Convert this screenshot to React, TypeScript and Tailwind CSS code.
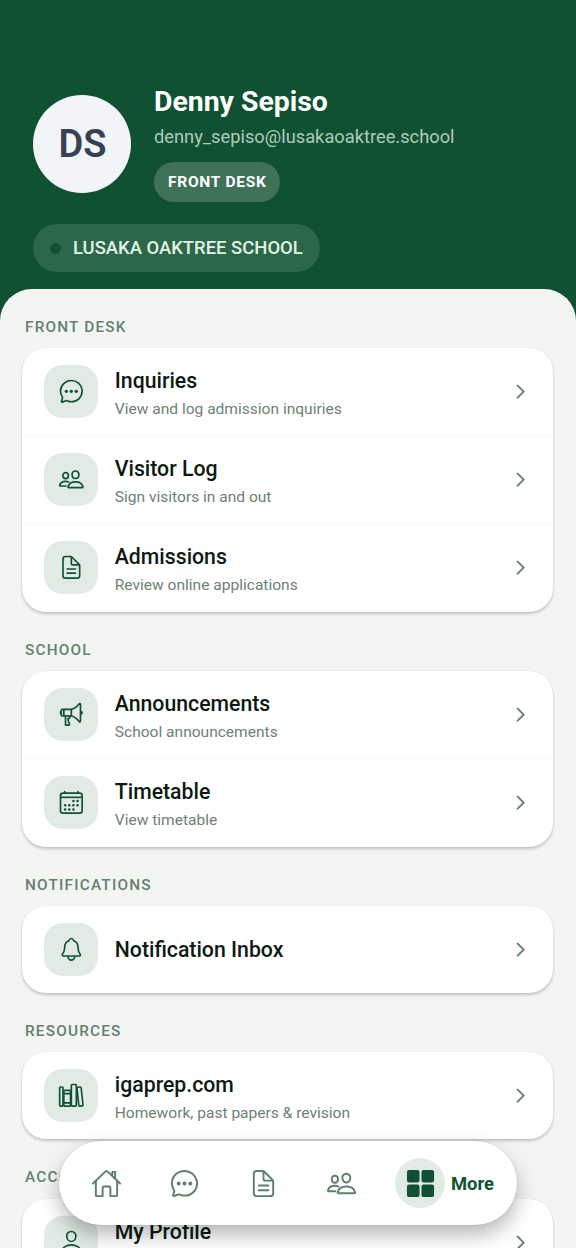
import type { ReactNode } from 'react';
import type { IconType } from 'react-icons';
import {
  IoCalendarOutline,
  IoChatbubbleEllipsesOutline,
  IoChevronForward,
  IoDocumentTextOutline,
  IoGrid,
  IoHomeOutline,
  IoLibraryOutline,
  IoMegaphoneOutline,
  IoNotificationsOutline,
  IoPeopleOutline,
  IoPersonOutline,
} from 'react-icons/io5';

type RowProps = { icon: IconType; title: string; subtitle?: string; divider?: boolean };

function Row({ icon: Icon, title, subtitle, divider }: RowProps) {
  return (
    <div
      className={`flex flex-1 items-center border-b pl-[22.4px] pr-[22.4px] only:border-b-0 ${
        divider ? 'border-[#f8faf8]' : 'border-transparent'
      }`}
    >
      <div className="flex size-[53.4px] shrink-0 items-center justify-center rounded-[18.67px] bg-[#e1eae5] text-[#115133]">
        <Icon size={26.67} />
      </div>
      <div className="ml-[17px] flex-1">
        <div className={`text-[21.25px] leading-[28px] font-medium text-[#0b1a12] ${subtitle ? 'mt-[3px]' : ''}`}>
          {title}
        </div>
        {subtitle && (
          <div className="mt-[3px] text-[15.55px] leading-[22px] text-[#6d7f75]">{subtitle}</div>
        )}
      </div>
      <IoChevronForward size={21.33} className="text-[#6a8074]" />
    </div>
  );
}

function Section({ title, size, children }: { title: string; size: string; children: ReactNode }) {
  return (
    <section>
      <h2 className="flex h-[59px] items-end pb-[11px] pl-[3px] text-[15.33px] leading-[20px] font-medium tracking-[1.2px] text-[#64806e]">
        {title}
      </h2>
      <div
        className={`flex flex-col rounded-[24px] bg-white shadow-[0_2px_3px_rgba(0,0,0,0.2),0_0_2px_rgba(0,0,0,0.06)] ${size}`}
      >
        {children}
      </div>
    </section>
  );
}

function NavIcon({ icon: Icon }: { icon: IconType }) {
  return (
    <div className="flex w-[78.5px] justify-center">
      <Icon size={31} />
    </div>
  );
}

export default function App() {
  return (
    <div className="relative h-[1248px] w-full overflow-hidden bg-[#115133] font-['Roboto',sans-serif]">
      <header className="h-[289px] pl-[33px] pt-[88px]">
        <div className="flex">
          <div className="mt-[7px] flex size-[98px] items-center justify-center rounded-full bg-[#f2f4f7] pl-px text-[38px] font-semibold text-[#374151]">
            DS
          </div>
          <div className="ml-[23px]">
            <h1 className="text-[28.4px] leading-[28px] font-bold text-white">Denny Sepiso</h1>
            <p className="mt-[8px] text-[18.3px] leading-[26px] text-[#accbb9]">
              denny_sepiso@lusakaoaktree.school
            </p>
            <span className="mt-[12px] inline-flex h-[40px] items-center rounded-full bg-[#3f7259] pt-px pr-[13.5px] pl-[14px] text-[15.5px] font-bold tracking-[0.75px] text-white">
              FRONT DESK
            </span>
          </div>
        </div>
        <div className="mt-[22px] inline-flex h-[48px] items-center rounded-full bg-[#2d674a] pr-[17px] pl-[17px]">
          <span className="size-[11px] rounded-full bg-[#115133]" />
          <span className="mt-px ml-[12px] text-[18.45px] font-medium text-[#e0f3e7]">
            LUSAKA OAKTREE SCHOOL
          </span>
        </div>
      </header>

      <main className="h-[1000px] rounded-t-[32px] bg-[#f3f5f3] pr-[22.6px] pl-[22px]">
        <Section title="FRONT DESK" size="h-[264px]">
          <Row icon={IoChatbubbleEllipsesOutline} title="Inquiries" subtitle="View and log admission inquiries" divider />
          <Row icon={IoPeopleOutline} title="Visitor Log" subtitle="Sign visitors in and out" divider />
          <Row icon={IoDocumentTextOutline} title="Admissions" subtitle="Review online applications" />
        </Section>
        <Section title="SCHOOL" size="h-[176px]">
          <Row icon={IoMegaphoneOutline} title="Announcements" subtitle="School announcements" divider />
          <Row icon={IoCalendarOutline} title="Timetable" subtitle="View timetable" />
        </Section>
        <Section title="NOTIFICATIONS" size="h-[87px]">
          <Row icon={IoNotificationsOutline} title="Notification Inbox" />
        </Section>
        <Section title="RESOURCES" size="h-[87px]">
          <Row icon={IoLibraryOutline} title="igaprep.com" subtitle="Homework, past papers & revision" />
        </Section>
        <Section title="ACCOUNT" size="mt-px h-[87px]">
          <Row icon={IoPersonOutline} title="My Profile" subtitle={'\u00a0'} />
        </Section>
      </main>

      <nav className="absolute top-[1141px] left-[59px] flex h-[84px] w-[458px] items-center rounded-full bg-white pl-[8px] text-[#5f7f6c] shadow-[0_10px_20px_rgba(0,0,0,0.28),0_0_3px_rgba(0,0,0,0.1)]">
        <NavIcon icon={IoHomeOutline} />
        <NavIcon icon={IoChatbubbleEllipsesOutline} />
        <NavIcon icon={IoDocumentTextOutline} />
        <NavIcon icon={IoPeopleOutline} />
        <div className="ml-[14px] flex items-center text-[#115133]">
          <div className="flex size-[50px] items-center justify-center rounded-full bg-[#e1eae5]">
            <IoGrid size={31} />
          </div>
          <span className="mt-px ml-[6px] text-[18.4px] font-bold">More</span>
        </div>
      </nav>
    </div>
  );
}
